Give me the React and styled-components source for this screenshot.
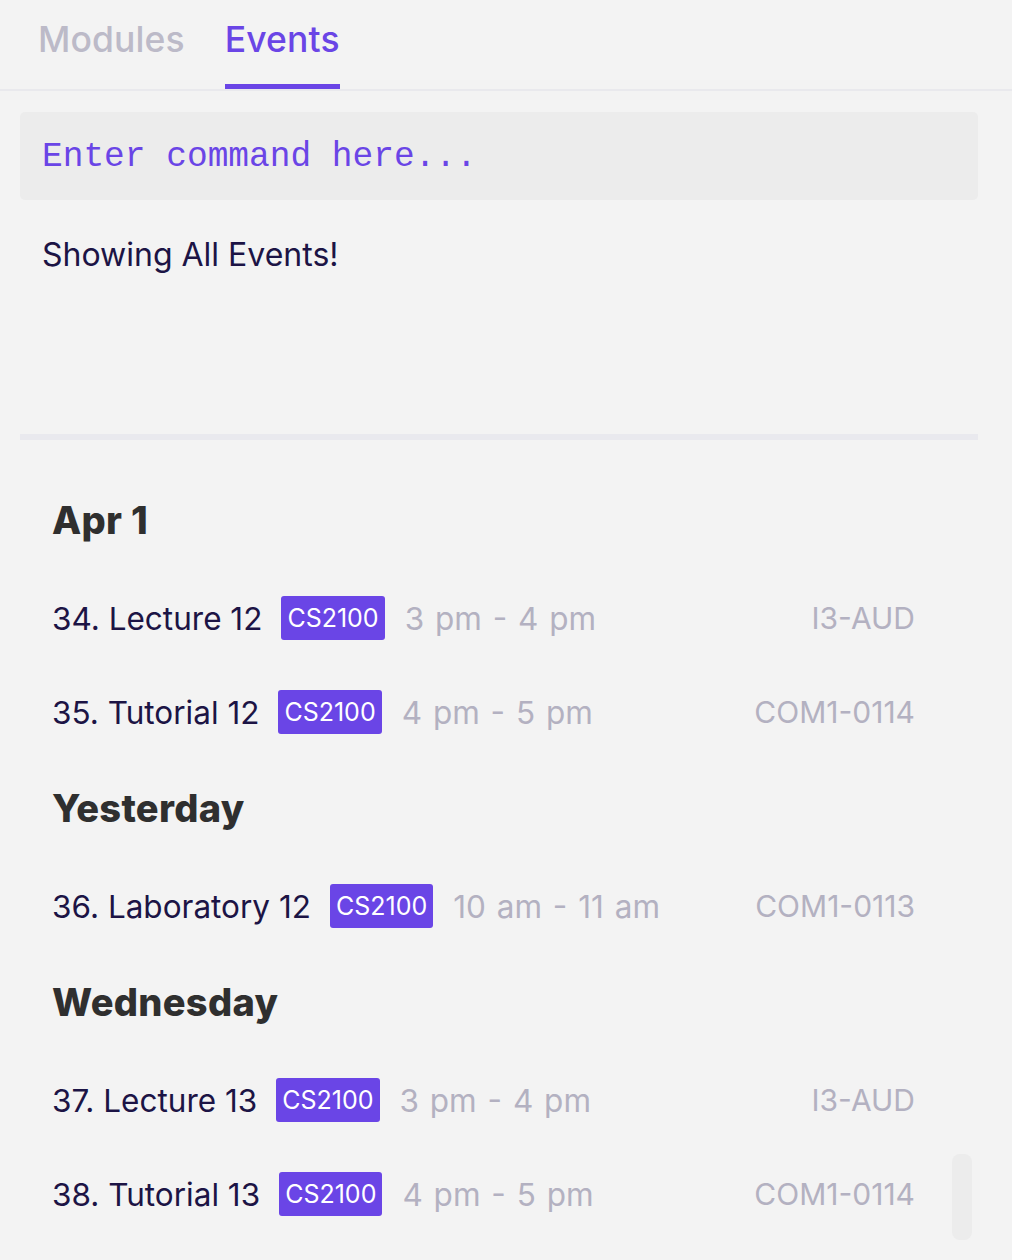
import React from 'react';
import styled, { createGlobalStyle } from 'styled-components';

const Global = createGlobalStyle`
  html, body {
    margin: 0;
    padding: 0;
    background: #f3f3f3;
  }
  body {
    font-family: Inter, "Noto Sans", sans-serif;
  }
`;

const groups = [
  {
    title: 'Apr 1',
    events: [
      { id: 34, name: 'Lecture 12', time: '3 pm - 4 pm', place: 'I3-AUD' },
      { id: 35, name: 'Tutorial 12', time: '4 pm - 5 pm', place: 'COM1-0114' },
    ],
  },
  {
    title: 'Yesterday',
    events: [
      { id: 36, name: 'Laboratory 12', time: '10 am - 11 am', place: 'COM1-0113' },
    ],
  },
  {
    title: 'Wednesday',
    events: [
      { id: 37, name: 'Lecture 13', time: '3 pm - 4 pm', place: 'I3-AUD' },
      { id: 38, name: 'Tutorial 13', time: '4 pm - 5 pm', place: 'COM1-0114' },
    ],
  },
];

export default function App() {
  return (
    <Page>
      <Global />
      <Tabs>
        <Tab>Modules</Tab>
        <Tab active>Events</Tab>
      </Tabs>
      <Body>
        <Command placeholder="Enter command here..." />
        <Result>Showing All Events!</Result>
        <Divider />
        <List>
          {groups.map(g => (
            <Group key={g.title}>
              <GroupTitle>{g.title}</GroupTitle>
              {g.events.map(e => (
                <Row key={e.id}>
                  <Name>{e.id}. {e.name}</Name>
                  <Badge>CS2100</Badge>
                  <Time>{e.time}</Time>
                  <Place>{e.place}</Place>
                </Row>
              ))}
            </Group>
          ))}
        </List>
      </Body>
      <Thumb />
    </Page>
  );
}

const Page = styled.div`
  position: relative;
  width: 1012px;
  height: 1260px;
  overflow: hidden;
  background: #f3f3f3;
`;

const Tabs = styled.div`
  display: flex;
  gap: 40px;
  padding-left: 38px;
  height: 91px;
  border-bottom: 2px solid #e9e9ed;
  box-sizing: border-box;
`;

const Tab = styled.div`
  font-size: 35.5px;
  font-weight: 500;
  letter-spacing: 0.1px;
  color: ${p => (p.active ? '#6a45e6' : '#bcbac8')};
  padding-top: 18px;
  box-sizing: border-box;
  border-bottom: 5px solid ${p => (p.active ? '#6a45e6' : 'transparent')};
`;

const Body = styled.div`
  padding: 21px 34px 0 20px;
`;

const Command = styled.input`
  display: block;
  width: 100%;
  height: 88px;
  box-sizing: border-box;
  border: none;
  outline: none;
  border-radius: 5px;
  background: #ececec;
  padding: 0 22px;
  font-family: "Liberation Mono", "Courier New", monospace;
  font-size: 34.5px;
  color: #6a45e6;
  &::placeholder {
    color: #6a45e6;
    opacity: 1;
  }
`;

const Result = styled.div`
  height: 234px;
  padding: 35px 0 0 22px;
  box-sizing: border-box;
  font-size: 32px;
  line-height: 39px;
  color: #1c1445;
`;

const Divider = styled.div`
  height: 6px;
  background: #e9e9ee;
`;

const List = styled.div`
  display: flex;
  flex-direction: column;
  gap: 19px;
  padding: 50px 63px 0 32px;
`;

const Group = styled.div`
  display: flex;
  flex-direction: column;
`;

const GroupTitle = styled.div`
  height: 60px;
  line-height: 60px;
  margin-bottom: 21px;
  font-size: 38px;
  font-weight: 800;
  letter-spacing: 0.3px;
  color: #2f2f2f;
`;

const Row = styled.div`
  display: flex;
  align-items: center;
  height: 94px;
`;

const Name = styled.div`
  font-size: 31.5px;
  color: #1c1445;
  margin-right: 19px;
`;

const Badge = styled.div`
  background: #6a45e6;
  color: #fff;
  font-size: 25px;
  height: 44px;
  padding: 0 6px;
  border-radius: 3px;
  display: flex;
  align-items: center;
  margin-right: 20px;
`;

const Time = styled.div`
  font-size: 31.5px;
  word-spacing: 2px;
  color: #b3b1c1;
  flex: 1;
`;

const Place = styled.div`
  font-size: 30px;
  color: #b3b1c1;
`;

const Thumb = styled.div`
  position: absolute;
  left: 952px;
  top: 1154px;
  width: 20px;
  height: 86px;
  border-radius: 8px;
  background: #ececec;
`;
